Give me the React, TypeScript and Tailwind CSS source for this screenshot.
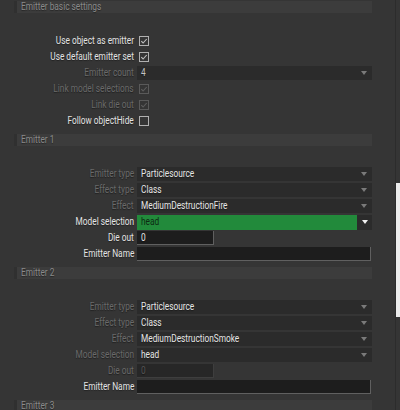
import type { ReactNode } from 'react';

type Tone = 'on' | 'off';

const labelTone = (t: Tone) => (t === 'on' ? 'text-[#e4e4e4]' : 'text-[#6a6a6a]');

// the UI font is narrow; squeeze Roboto to match
function Txt({ children, right }: { children: ReactNode; right?: boolean }) {
  return (
    <span className={`inline-block whitespace-nowrap scale-x-[0.79] ${right ? 'origin-right' : 'origin-left'}`}>
      {children}
    </span>
  );
}

function Arrow({ light }: { light?: boolean }) {
  return (
    <svg width="6" height="4" viewBox="0 0 6 4" className="shrink-0">
      <polygon points="0,0 6,0 3,4" fill={light ? '#f0f0f0' : '#7a7a7a'} />
    </svg>
  );
}

function Check({ checked, enabled }: { checked: boolean; enabled: boolean }) {
  const c = enabled ? '#c0c0c0' : '#5e5e5e';
  return (
    <div
      className={`ml-[2px] w-[10px] h-[10px] border ${enabled ? 'border-[#b0b0b0]' : 'border-[#5a5a5a]'} flex items-center justify-center`}
    >
      {checked && (
        <svg width="8" height="8" viewBox="0 0 8 8">
          <path d="M1.3 4.2 L3.1 6 L6.7 2" stroke={c} strokeWidth="1.1" fill="none" />
        </svg>
      )}
    </div>
  );
}

function Select({ value, dim }: { value: string; dim?: boolean }) {
  return (
    <div className="flex-1 h-[14px] bg-[#2b2b2b] flex items-center pl-[4px] pr-[5px]">
      <span className={`flex-1 ${dim ? 'text-[#c4c4c4]' : 'text-[#e6e6e6]'}`}>
        <Txt>{value}</Txt>
      </span>
      <Arrow />
    </div>
  );
}

function Row({ label, tone, children }: { label: string; tone: Tone; children: ReactNode }) {
  return (
    <div className="h-[14px] flex items-center">
      <div className={`w-[120px] text-right ${labelTone(tone)}`}>
        <Txt right>{label}</Txt>
      </div>
      <div className="ml-[3px] flex-1 flex items-center h-[14px]">{children}</div>
    </div>
  );
}

function Header({ title }: { title: string }) {
  return (
    <div className="h-[12px] flex bg-[#3c3c3c]">
      <div className="w-[3px] bg-[#303030]" />
      <div className="pl-[4px] text-[#8a8a8a] leading-[12px]">
        <Txt>{title}</Txt>
      </div>
    </div>
  );
}

function Section({ title, children }: { title: string; children: ReactNode }) {
  return (
    <div>
      <Header title={title} />
      <div className="pt-[21px] pb-[6px] flex flex-col gap-[2px]">{children}</div>
    </div>
  );
}

function TextBox({ value, width, disabled }: { value: string; width: string; disabled?: boolean }) {
  return (
    <div
      className={`${width} h-[14px] flex items-center pl-[4px] border-r border-b ${
        disabled ? 'bg-[#272727] border-[#3e3e3e] text-[#555555]' : 'bg-[#1d1d1d] border-[#606060] text-[#e6e6e6]'
      }`}
    >
      <Txt>{value}</Txt>
    </div>
  );
}

function Emitter({ n, effect, active }: { n: number; effect: string; active: boolean }) {
  return (
    <Section title={`Emitter ${n}`}>
      <Row label="Emitter type" tone="off">
        <Select value="Particlesource" />
      </Row>
      <Row label="Effect type" tone="off">
        <Select value="Class" />
      </Row>
      <Row label="Effect" tone="off">
        <Select value={effect} />
      </Row>
      <Row label="Model selection" tone={active ? 'on' : 'off'}>
        {active ? (
          <div className="flex-1 flex h-[15px]">
            <div className="flex-1 bg-[#228a3b] pl-[4px] flex items-center text-[#0c2a12] [text-shadow:none]">
              <Txt>head</Txt>
            </div>
            <div className="w-[15px] bg-[#2b2b2b] flex items-center justify-center">
              <Arrow light />
            </div>
          </div>
        ) : (
          <Select value="head" />
        )}
      </Row>
      <Row label="Die out" tone={active ? 'on' : 'off'}>
        <TextBox value="0" width="w-[77px]" disabled={!active} />
      </Row>
      <Row label="Emitter Name" tone="on">
        <div className="flex-1 mr-[1px]">
          <TextBox value="" width="w-full" />
        </div>
      </Row>
    </Section>
  );
}

export default function App() {
  return (
    <div
      className="w-[400px] h-[410px] overflow-hidden bg-[#353535] flex text-[10.5px] leading-[14px]"
      style={{ fontFamily: 'Roboto, "Noto Sans", sans-serif' }}
    >
      <div className="w-[395px] pl-[14px] pr-[23px] pt-[1px] [text-shadow:0_1px_1px_rgba(0,0,0,0.4)]">
        <Section title="Emitter basic settings">
          <Row label="Use object as emitter" tone="on">
            <Check checked enabled />
          </Row>
          <Row label="Use default emitter set" tone="on">
            <Check checked enabled />
          </Row>
          <Row label="Emitter count" tone="off">
            <Select value="4" dim />
          </Row>
          <Row label="Link model selections" tone="off">
            <Check checked enabled={false} />
          </Row>
          <Row label="Link die out" tone="off">
            <Check checked enabled={false} />
          </Row>
          <Row label="Follow objectHide" tone="on">
            <Check checked={false} enabled />
          </Row>
        </Section>
        <Emitter n={1} effect="MediumDestructionFire" active />
        <Emitter n={2} effect="MediumDestructionSmoke" active={false} />
        <Header title="Emitter 3" />
      </div>
      <div className="w-[1px] bg-[#2c2c2c]" />
      <div className="w-[4px] flex flex-col">
        <div className="h-[183px]" />
        <div className="h-[134px] bg-[#ececec]" />
      </div>
    </div>
  );
}
